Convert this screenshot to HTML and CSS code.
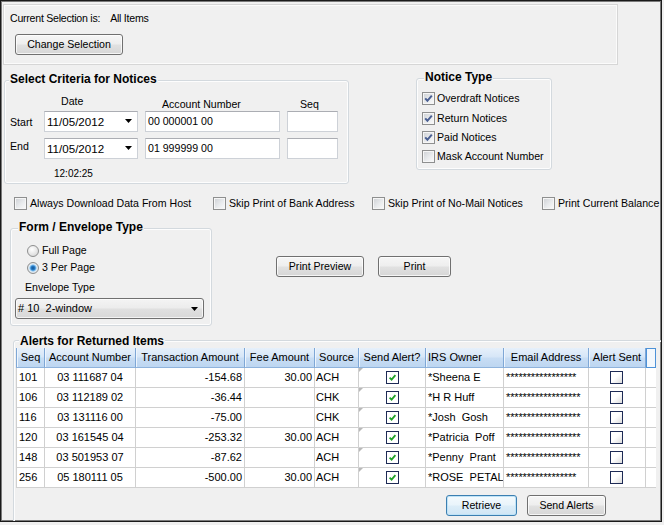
FILE: index.html
```html
<!DOCTYPE html>
<html>
<head>
<meta charset="utf-8">
<title>Returned Item Notices</title>
<link rel="stylesheet" href="styles.css">
</head>
<body>
<div class="window">
  <div class="top-panel">
    <div class="sel-text"><span>Current Selection is:</span><span class="sel-value">All Items</span></div>
    <button class="btn btn-change">Change Selection</button>
  </div>

  <div class="criteria-row">
    <div class="group criteria">
      <div class="group-title">Select Criteria for Notices</div>
      <div class="crit-grid">
        <span></span>
        <span class="hdr hdr-date">Date</span>
        <span class="hdr hdr-acct">Account Number</span>
        <span class="hdr hdr-seq">Seq</span>

        <span class="row-label lbl-start">Start</span>
        <div class="datepick"><span class="dp-val">11/05/2012</span><svg class="dd" width="7" height="4" viewBox="0 0 7 4"><path d="M0 0H7L3.5 4Z"/></svg></div>
        <div class="textbox">00 000001 00</div>
        <div class="textbox"></div>

        <span class="row-label lbl-end">End</span>
        <div class="datepick"><span class="dp-val">11/05/2012</span><svg class="dd" width="7" height="4" viewBox="0 0 7 4"><path d="M0 0H7L3.5 4Z"/></svg></div>
        <div class="textbox">01 999999 00</div>
        <div class="textbox"></div>

        <span></span>
        <span class="time">12:02:25</span>
      </div>
    </div>

    <div class="group notice">
      <div class="group-title">Notice Type</div>
      <div class="notice-list">
        <div class="chk-item"><span class="cb"><svg width="11" height="11" viewBox="0 0 11 11"><path d="M2.2 5.4 4.4 7.8 8.8 2.6"/></svg></span>Overdraft Notices</div>
        <div class="chk-item"><span class="cb"><svg width="11" height="11" viewBox="0 0 11 11"><path d="M2.2 5.4 4.4 7.8 8.8 2.6"/></svg></span>Return Notices</div>
        <div class="chk-item"><span class="cb"><svg width="11" height="11" viewBox="0 0 11 11"><path d="M2.2 5.4 4.4 7.8 8.8 2.6"/></svg></span>Paid Notices</div>
        <div class="chk-item"><span class="cb"></span>Mask Account Number</div>
      </div>
    </div>
  </div>

  <div class="options-row">
    <div class="opt opt1"><span class="cb"></span>Always Download Data From Host</div>
    <div class="opt opt2"><span class="cb"></span>Skip Print of Bank Address</div>
    <div class="opt opt3"><span class="cb"></span>Skip Print of No-Mail Notices</div>
    <div class="opt"><span class="cb"></span>Print Current Balance</div>
  </div>

  <div class="form-row">
    <div class="group envelope">
      <div class="group-title">Form / Envelope Type</div>
      <div class="radio-list">
        <div class="radio-item"><span class="radio"></span>Full Page</div>
        <div class="radio-item"><span class="radio on"></span>3 Per Page</div>
      </div>
      <div class="env-label">Envelope Type</div>
      <div class="combo"><span class="combo-val"># 10&nbsp;&nbsp;2-window</span><svg class="dd" width="7" height="4" viewBox="0 0 7 4"><path d="M0 0H7L3.5 4Z"/></svg></div>
    </div>
    <button class="btn btn-preview">Print Preview</button>
    <button class="btn btn-print">Print</button>
  </div>

  <div class="group alerts">
    <div class="group-title">Alerts for Returned Items</div>
    <div class="grid">
      <div class="grid-row grid-head">
        <div class="gh">Seq</div>
        <div class="gh">Account Number</div>
        <div class="gh">Transaction Amount</div>
        <div class="gh">Fee Amount</div>
        <div class="gh">Source</div>
        <div class="gh">Send Alert?</div>
        <div class="gh gh-left">IRS Owner</div>
        <div class="gh">Email Address</div>
        <div class="gh">Alert Sent</div>
        <div class="gh gh-sel"></div>
      </div>

      <div class="grid-row">
        <div class="gc">101</div><div class="gc center">03 111687 04</div><div class="gc right">-154.68</div><div class="gc right">30.00</div><div class="gc src">ACH</div>
        <div class="gc center mark"><span class="gcb"><svg width="11" height="11" viewBox="0 0 11 11"><path d="M2.6 5.6 4.6 7.6 8.4 3.2"/></svg></span></div>
        <div class="gc">*Sheena E</div><div class="gc stars">*****************</div><div class="gc center sent"><span class="gcb empty"></span></div><div class="gc fill"></div>
      </div>
      <div class="grid-row">
        <div class="gc">106</div><div class="gc center">03 112189 02</div><div class="gc right">-36.44</div><div class="gc right"></div><div class="gc src">CHK</div>
        <div class="gc center mark"><span class="gcb"><svg width="11" height="11" viewBox="0 0 11 11"><path d="M2.6 5.6 4.6 7.6 8.4 3.2"/></svg></span></div>
        <div class="gc">*H R Huff</div><div class="gc stars">******************</div><div class="gc center sent"><span class="gcb empty"></span></div><div class="gc fill"></div>
      </div>
      <div class="grid-row">
        <div class="gc">116</div><div class="gc center">03 131116 00</div><div class="gc right">-75.00</div><div class="gc right"></div><div class="gc src">CHK</div>
        <div class="gc center mark"><span class="gcb"><svg width="11" height="11" viewBox="0 0 11 11"><path d="M2.6 5.6 4.6 7.6 8.4 3.2"/></svg></span></div>
        <div class="gc">*Josh&nbsp;&nbsp;Gosh</div><div class="gc stars">******************</div><div class="gc center sent"><span class="gcb empty"></span></div><div class="gc fill"></div>
      </div>
      <div class="grid-row">
        <div class="gc">120</div><div class="gc center">03 161545 04</div><div class="gc right">-253.32</div><div class="gc right">30.00</div><div class="gc src">ACH</div>
        <div class="gc center mark"><span class="gcb"><svg width="11" height="11" viewBox="0 0 11 11"><path d="M2.6 5.6 4.6 7.6 8.4 3.2"/></svg></span></div>
        <div class="gc">*Patricia&nbsp;&nbsp;Poff</div><div class="gc stars">******************</div><div class="gc center sent"><span class="gcb empty"></span></div><div class="gc fill"></div>
      </div>
      <div class="grid-row">
        <div class="gc">148</div><div class="gc center">03 501953 07</div><div class="gc right">-87.62</div><div class="gc right"></div><div class="gc src">ACH</div>
        <div class="gc center mark"><span class="gcb"><svg width="11" height="11" viewBox="0 0 11 11"><path d="M2.6 5.6 4.6 7.6 8.4 3.2"/></svg></span></div>
        <div class="gc">*Penny&nbsp;&nbsp;Prant</div><div class="gc stars">******************</div><div class="gc center sent"><span class="gcb empty"></span></div><div class="gc fill"></div>
      </div>
      <div class="grid-row">
        <div class="gc">256</div><div class="gc center">05 180111 05</div><div class="gc right">-500.00</div><div class="gc right">30.00</div><div class="gc src">ACH</div>
        <div class="gc center mark"><span class="gcb"><svg width="11" height="11" viewBox="0 0 11 11"><path d="M2.6 5.6 4.6 7.6 8.4 3.2"/></svg></span></div>
        <div class="gc">*ROSE&nbsp;&nbsp;PETAL</div><div class="gc stars">*****************</div><div class="gc center sent"><span class="gcb empty"></span></div><div class="gc fill"></div>
      </div>
    </div>
    <div class="alert-actions">
      <button class="btn btn-default btn-retrieve">Retrieve</button>
      <button class="btn btn-send">Send Alerts</button>
    </div>
  </div>
</div>
</body>
</html>
```

FILE: styles.css
```css
* { box-sizing: border-box; }

html, body {
  margin: 0;
  padding: 0;
  background: #f0f0f0;
}

body {
  font-family: "Liberation Sans", Arial, sans-serif;
  font-size: 10.6px;
  line-height: 13px;
  color: #000;
}

.window {
  width: 662px;
  height: 522px;
  border: 1px solid #1a1a1a;
  box-shadow: inset 0 0 0 1px #7a7a7a;
  background: #f0f0f0;
  padding: 3px 0 0 2px;
  overflow: hidden;
}

/* ---------- buttons ---------- */
.btn {
  display: block;
  padding: 0;
  font-family: inherit;
  font-size: 10.6px;
  line-height: 13px;
  color: #000;
  text-align: center;
  border: 1px solid #707070;
  border-radius: 3px;
  background: linear-gradient(#f6f6f6 0%, #eeeeee 47%, #e1e1e1 53%, #d6d6d6 100%);
  box-shadow: inset 0 0 0 1px rgba(255, 255, 255, 0.75);
  height: 21px;
}

.btn-default {
  border-color: #3c7fb1;
  background: linear-gradient(#f4fafd 0%, #e9f4fb 47%, #dcedf8 53%, #d0e6f5 100%);
  box-shadow: inset 0 0 0 1px #bfe3f7;
}

/* ---------- top panel ---------- */
.top-panel {
  width: 615px;
  height: 61px;
  border: 1px solid #d6d6d6;
  box-shadow: inset 0 0 0 1px #fbfbfb;
  padding: 7px 0 0 6px;
}

.sel-text { letter-spacing: -0.25px; }
.sel-value { margin-left: 10px; }

.btn-change {
  margin: 9px 0 0 5px;
  width: 108px;
}

/* ---------- group boxes ---------- */
.group {
  border: 1px solid #d3d9de;
  border-radius: 3px;
  box-shadow: inset 0 0 0 1px #fdfdfd;
}

.group-title {
  width: max-content;
  font-weight: bold;
  font-size: 12px;
  line-height: 14px;
  padding: 0 1px;
  background: #f0f0f0;
  margin-top: -9px;
}

/* ---------- criteria ---------- */
.criteria-row {
  display: flex;
  align-items: flex-start;
  margin-top: 15px;
}

.criteria {
  margin-left: 1px;
  width: 345px;
  height: 104px;
}

.criteria .group-title { margin-left: 4px; }

.crit-grid {
  display: grid;
  grid-template-columns: 27px 94px 135px 51px;
  grid-template-rows: 13px 27px 28px 13px;
  column-gap: 7px;
  margin: 12px 0 0 5px;
  align-items: start;
}

.hdr-date { margin: -3px 0 0 17px; }
.hdr-acct { margin-left: 17px; }
.hdr-seq { margin-left: 13px; }

.lbl-start { margin-top: 5px; }
.lbl-end { margin-top: 2px; }

.datepick,
.textbox {
  height: 21px;
  background: #fff;
  border: 1px solid #cdd1d7;
  border-top-color: #abadb3;
}

.datepick {
  display: flex;
  align-items: center;
  padding: 0 5px 1px 2px;
}

.dp-val {
  flex: 1;
  font-size: 11.6px;
}

.dd { display: block; flex: none; }
.dd path { fill: #000; }

.textbox {
  padding: 3px 0 0 2px;
}

.time {
  margin-left: 10px;
  font-size: 10px;
  margin-top: 1px;
}

/* ---------- notice type ---------- */
.notice {
  margin: -2px 0 0 67px;
  width: 136px;
  height: 92px;
}

.notice .group-title { margin-left: 7px; }

.notice-list { margin: 5px 0 0 5px; }

.chk-item {
  height: 19.4px;
  display: flex;
  align-items: center;
  gap: 2px;
}

.cb {
  flex: none;
  width: 13px;
  height: 13px;
  border: 1px solid #8e8f8f;
  background: linear-gradient(135deg, #cdd0d4 0%, #e9ebed 55%, #fbfbfb 100%);
  box-shadow: inset 0 0 0 1px #f6f6f6;
  display: flex;
  align-items: center;
  justify-content: center;
}

.cb svg { display: block; }
.cb path {
  fill: none;
  stroke: #4a5f92;
  stroke-width: 2;
}

/* ---------- options row ---------- */
.options-row {
  display: flex;
  height: 15px;
  margin: 12px 0 0 11px;
}

.opt {
  display: flex;
  align-items: center;
  gap: 3px;
  white-space: nowrap;
}

.opt1 { width: 199px; }
.opt2 { width: 159px; }
.opt3 { width: 170px; }

/* ---------- form / envelope ---------- */
.form-row {
  display: flex;
  align-items: flex-start;
  margin-top: 17px;
}

.envelope {
  margin-left: 7px;
  width: 202px;
  height: 98px;
}

.envelope .group-title { margin-left: 7px; }

.radio-list { margin: 8px 0 0 16px; }

.radio-item {
  height: 17px;
  display: flex;
  align-items: center;
  gap: 3px;
}

.radio {
  flex: none;
  width: 12px;
  height: 12px;
  border-radius: 50%;
  border: 1px solid #8e8f8f;
  background: radial-gradient(circle at 40% 35%, #ffffff 0%, #e6e6e6 55%, #cfcfcf 100%);
}

.radio.on {
  background: radial-gradient(circle at 50% 50%, #0f5595 0, #2a7cc6 2px, #7fc0f0 3px, #e4eef6 4px, #d6d6d6 6px);
}

.env-label { margin: 5px 0 0 14px; }

.combo {
  margin: 4px 0 0 4px;
  width: 189px;
  height: 21px;
  display: flex;
  align-items: center;
  padding: 0 5px 0 2px;
  border: 1px solid #707070;
  border-radius: 3px;
  background: linear-gradient(#f4f4f4 0%, #ececec 48%, #e0e0e0 52%, #d8d8d8 100%);
  box-shadow: inset 0 0 0 1px rgba(255, 255, 255, 0.7);
}

.combo-val { flex: 1; font-size: 11px; }

.btn-preview {
  margin: 28px 0 0 64px;
  width: 88px;
}

.btn-print {
  margin: 28px 0 0 14px;
  width: 73px;
}

/* ---------- alerts ---------- */
.alerts {
  margin: 14px 0 0 10px;
  width: 660px;
  height: 200px;
}

.alerts .group-title {
  margin: -7px 0 0 5px;
}

.grid {
  width: 640px;
  margin-left: 2px;
  font-size: 11px;
}

.grid-row {
  display: grid;
  grid-template-columns: 29px 91px 109px 70px 44px 67px 78px 85px 57px 10px;
  height: 20px;
}

.gh {
  background: linear-gradient(#e6f0fb 0%, #d6e6f7 48%, #c8ddf4 52%, #bdd6f1 100%);
  border-right: 1px solid #7ea7d6;
  border-bottom: 1px solid #8fb3dc;
  box-shadow: inset 1px 0 0 #eef5fd;
  text-align: center;
  line-height: 19px;
  white-space: nowrap;
  overflow: hidden;
}

.gh:first-child { border-left: 1px solid #7ea7d6; }
.gh-left { text-align: left; padding-left: 2px; }

.gh-sel {
  background: #f3f8fd;
  border: 1px solid #4d92d8;
  box-shadow: none;
}

.gc {
  position: relative;
  background: #fff;
  border-right: 1px solid #d0d0d0;
  border-bottom: 1px solid #d0d0d0;
  line-height: 18px;
  padding: 0 2px;
  white-space: nowrap;
  overflow: hidden;
}

.gc:first-child { border-left: 1px solid #d0d0d0; }

.center { text-align: center; }
.right { text-align: right; }
.src { padding-left: 1px; }

.stars { letter-spacing: -0.15px; }

.mark,
.sent {
  display: flex;
  align-items: center;
  justify-content: center;
}

.sent { padding-right: 4px; }

.mark::before {
  content: "";
  position: absolute;
  top: 0;
  left: 0;
  border-top: 4px solid #b9b9b9;
  border-right: 4px solid transparent;
}

.gcb {
  flex: none;
  width: 13px;
  height: 13px;
  border: 1px solid #1d2a55;
  background: #fff;
  display: flex;
  align-items: center;
  justify-content: center;
}

.gcb svg { display: block; }
.gcb path {
  fill: none;
  stroke: #22a32a;
  stroke-width: 1.8;
}

.gcb.empty {
  background: linear-gradient(135deg, #ffffff 45%, #dcdcdc 100%);
}

.fill { border-right: none; }

.alert-actions {
  width: 640px;
  margin: 7px 0 0 2px;
  padding-right: 50px;
  display: flex;
  justify-content: flex-end;
  gap: 10px;
}

.btn-retrieve { width: 71px; }
.btn-send { width: 79px; }
```
